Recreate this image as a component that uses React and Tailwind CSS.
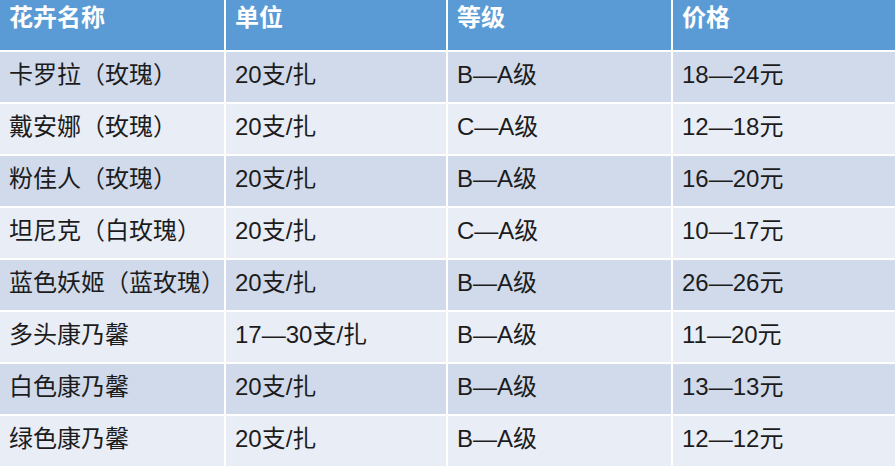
const HEAD = ['花卉名称', '单位', '等级', '价格']

const ROWS = [
  ['卡罗拉（玫瑰）', '20支/扎', 'B—A级', '18—24元'],
  ['戴安娜（玫瑰）', '20支/扎', 'C—A级', '12—18元'],
  ['粉佳人（玫瑰）', '20支/扎', 'B—A级', '16—20元'],
  ['坦尼克（白玫瑰）', '20支/扎', 'C—A级', '10—17元'],
  ['蓝色妖姬（蓝玫瑰）', '20支/扎', 'B—A级', '26—26元'],
  ['多头康乃馨', '17—30支/扎', 'B—A级', '11—20元'],
  ['白色康乃馨', '20支/扎', 'B—A级', '13—13元'],
  ['绿色康乃馨', '20支/扎', 'B—A级', '12—12元'],
]

export default function App() {
  return (
    <div
      className="w-[895px] h-[469px] overflow-hidden bg-white [text-spacing-trim:space-all]"
      style={{ fontFamily: '"Liberation Sans", "Noto Sans CJK SC", sans-serif' }}
    >
      <div className="grid grid-cols-[224px_220px_223px_222px] gap-[2px] grid-rows-[50px_repeat(8,50px)]">
        {HEAD.map((h) => (
          <div key={h} className="bg-[#5b9bd5] text-white font-bold text-[24px] leading-[28px] pl-[9px] pt-[4px]">
            {h}
          </div>
        ))}
        {ROWS.map((row, i) =>
          row.map((cell, j) => (
            <div
              key={i + '-' + j}
              className={
                (i % 2 === 0 ? 'bg-[#d1daeb]' : 'bg-[#e9edf6]') +
                ' text-[#1c1c1c] text-[24px] leading-[28px] pl-[9px] pt-[9px] whitespace-nowrap'
              }
            >
              {cell}
            </div>
          ))
        )}
      </div>
    </div>
  )
}
